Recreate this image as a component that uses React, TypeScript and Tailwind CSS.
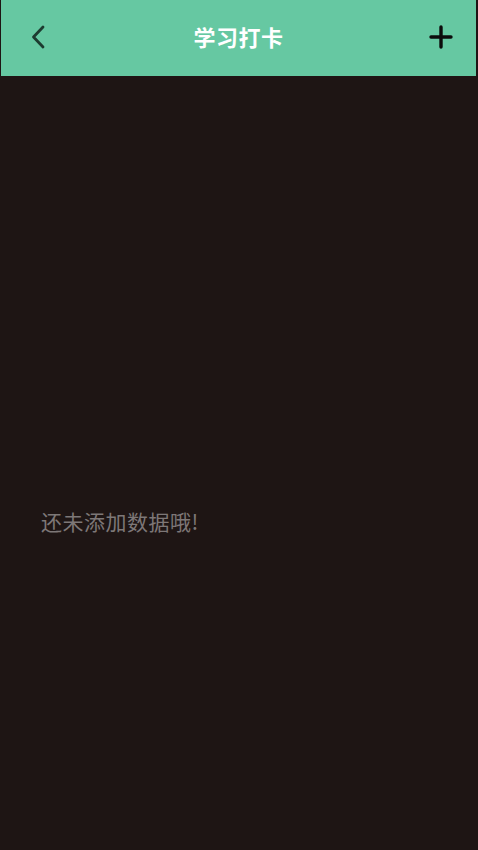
import React from "react";

export default function App() {
  return (
    <div
      className="w-[478px] h-[850px] bg-[#1e1514] flex flex-col"
      style={{ fontFamily: '"Noto Sans CJK SC", "Noto Sans", sans-serif' }}
    >
      <div className="h-[76px] ml-[1px] mr-[2px] bg-[#66c8a2] flex items-center justify-between pl-[26px] pr-[22px] pb-[3px]">
        <button className="w-[22px] h-[26px] flex items-center justify-center">
          <svg width="16" height="26" viewBox="0 0 16 26" fill="none">
            <path d="M13 3 L3.5 13 L13 23" stroke="#1d3b30" strokeWidth="2.8" strokeLinecap="round" strokeLinejoin="round" />
          </svg>
        </button>
        <div className="text-white text-[22px] font-bold tracking-[0.5px]">学习打卡</div>
        <button className="w-[26px] h-[26px] flex items-center justify-center">
          <svg width="24" height="24" viewBox="0 0 24 24" fill="none">
            <path d="M12 2 V22 M2 12 H22" stroke="#0c0c0c" strokeWidth="3.4" strokeLinecap="round" />
          </svg>
        </button>
      </div>
      <div className="flex-1 flex items-center px-[41px] pt-[118px]">
        <div className="text-[#7d7777] text-[21px] tracking-[0.5px]">还未添加数据哦!</div>
      </div>
    </div>
  );
}
